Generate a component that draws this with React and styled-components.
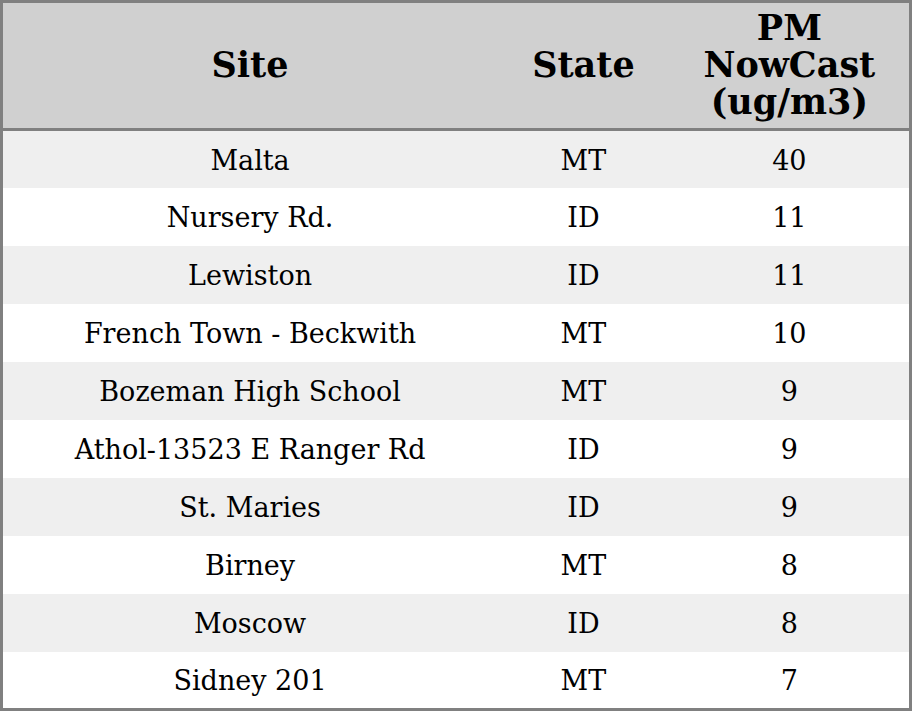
import React from 'react';
import styled, { createGlobalStyle } from 'styled-components';

const GlobalStyle = createGlobalStyle`
  html, body {
    margin: 0;
    padding: 0;
    background: #ffffff;
  }
`

const Table = styled.table`
  width: 912px;
  border-collapse: collapse;
  border: 3px solid #808080;
  font-family: "DejaVu Serif", serif;
  color: #000;
`

const HeadCell = styled.th`
  background: #d0d0d0;
  border-bottom: 3px solid #808080;
  font-size: 35px;
  line-height: 37px;
  font-weight: 700;
  text-align: center;
  padding: 6px 0 8px;
  height: 124px;
  box-sizing: border-box;
  width: ${p => p.$w}px;
`

const Row = styled.tr`
  background: ${p => (p.$odd ? '#efefef' : '#ffffff')};
  height: 58px;
`

const Cell = styled.td`
  font-size: 27px;
  text-align: center;
  padding: 2px 0 0;
`

const rows = [
  ['Malta', 'MT', 40],
  ['Nursery Rd.', 'ID', 11],
  ['Lewiston', 'ID', 11],
  ['French Town - Beckwith', 'MT', 10],
  ['Bozeman High School', 'MT', 9],
  ['Athol-13523 E Ranger Rd', 'ID', 9],
  ['St. Maries', 'ID', 9],
  ['Birney', 'MT', 8],
  ['Moscow', 'ID', 8],
  ['Sidney 201', 'MT', 7],
];

export default function App() {
  return (
    <>
      <GlobalStyle />
      <Table>
        <thead>
          <tr>
            <HeadCell $w={494}>Site</HeadCell>
            <HeadCell $w={172}>State</HeadCell>
            <HeadCell $w={240}>PM<br />NowCast<br />(ug/m3)</HeadCell>
          </tr>
        </thead>
        <tbody>
          {rows.map(([site, state, pm], i) => (
            <Row key={site} $odd={i % 2 === 0}>
              <Cell>{site}</Cell>
              <Cell>{state}</Cell>
              <Cell>{pm}</Cell>
            </Row>
          ))}
        </tbody>
      </Table>
    </>
  )
}
